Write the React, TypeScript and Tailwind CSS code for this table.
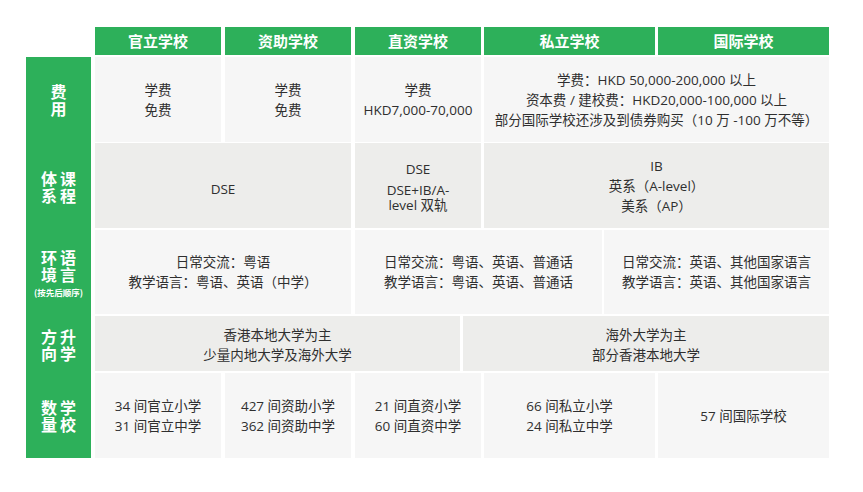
import React from 'react';

// cell backgrounds alternate by row
const LIGHT = 'bg-[#f6f6f6]';
const GREY = 'bg-[#ededeb]';

type CellProps = { w: string; bg: string; children: React.ReactNode };

const Cell = ({ w, bg, children }: CellProps) => (
  <div className={`${w} ${bg} h-full flex flex-col items-center justify-center text-center text-[13.5px] leading-[20px] text-[#2f2f2f] font-['Open_Sans','Noto_Sans_CJK_SC',sans-serif]`}>
    {children}
  </div>
);

const headers = [
  { name: '官立学校', w: 'w-[126px]' },
  { name: '资助学校', w: 'w-[126px]' },
  { name: '直资学校', w: 'w-[126px]' },
  { name: '私立学校', w: 'w-[171px]' },
  { name: '国际学校', w: 'w-[171px]' },
];

const Label = ({ h, lines, note }: { h: string; lines: string[]; note?: string }) => (
  <div className={`${h} flex flex-col items-center justify-center text-white font-bold`}>
    {lines.map((l) => (
      <div key={l} className="text-[16px] leading-[17px] tracking-[3px] pl-[3px]">{l}</div>
    ))}
    {note && <div className="text-[8.5px] leading-[12px] mt-[3px]">{note}</div>}
  </div>
);

export default function App() {
  return (
    <div className="w-[863px] h-[492px] bg-white pt-[27px] pl-[26px] font-['Noto_Sans_CJK_SC','Noto_Sans',sans-serif]">
      {/* header row */}
      <div className="flex h-[28px]">
        <div className="w-[69px]" />
        <div className="flex gap-[4px]">
          {headers.slice(0, 3).map((h) => (
            <div key={h.name} className={`${h.w} bg-[#2db05a] flex items-center justify-center text-white font-bold text-[15px]`}>
              {h.name}
            </div>
          ))}
        </div>
        <div className="flex gap-[3px] ml-[3px]">
          {headers.slice(3).map((h) => (
            <div key={h.name} className={`${h.w} bg-[#2db05a] flex items-center justify-center text-white font-bold text-[15px]`}>
              {h.name}
            </div>
          ))}
        </div>
      </div>

      <div className="flex mt-[2px]">
        {/* left label column */}
        <div className="w-[65px] bg-[#2db05a] flex flex-col">
          <Label h="h-[86px]" lines={['费', '用']} />
          <Label h="h-[87px]" lines={['体课', '系程']} />
          <Label h="h-[86px]" lines={['环语', '境言']} note="(按先后顺序)" />
          <Label h="h-[57px]" lines={['方升', '向学']} />
          <Label h="h-[85px]" lines={['数学', '量校']} />
        </div>

        <div className="ml-[4px] w-[734px] flex flex-col">
          {/* fees */}
          <div className="flex h-[85px]">
            <Cell w="w-[126px]" bg={LIGHT}><div>学费</div><div>免费</div></Cell>
            <div className="w-[4px]" />
            <Cell w="w-[126px]" bg={LIGHT}><div>学费</div><div>免费</div></Cell>
            <div className="w-[4px]" />
            <Cell w="w-[126px]" bg={LIGHT}><div>学费</div><div>HKD7,000-70,000</div></Cell>
            <div className="w-[3px]" />
            <Cell w="w-[345px]" bg={LIGHT}>
              <div>学费：HKD 50,000-200,000 以上</div>
              <div>资本费 / 建校费：HKD20,000-100,000 以上</div>
              <div>部分国际学校还涉及到债券购买（10 万 -100 万不等）</div>
            </Cell>
          </div>

          {/* curriculum */}
          <div className="flex h-[85px] mt-[1px]">
            <Cell w="w-[256px]" bg={GREY}><div className="pt-[7px]">DSE</div></Cell>
            <div className="w-[4px]" />
            <Cell w="w-[126px]" bg={GREY}>
              <div>DSE</div>
              <div className="leading-[15px] mt-[4px]">DSE+IB/A-<br />level 双轨</div>
            </Cell>
            <div className="w-[3px]" />
            <Cell w="w-[345px]" bg={GREY}>
              <div>IB</div>
              <div>英系（A-level）</div>
              <div>美系（AP）</div>
            </Cell>
          </div>

          {/* language */}
          <div className="flex h-[84px] mt-[2px]">
            <Cell w="w-[256px]" bg={LIGHT}>
              <div>日常交流：粤语</div>
              <div>教学语言：粤语、英语（中学）</div>
            </Cell>
            <div className="w-[4px]" />
            <Cell w="w-[247px]" bg={LIGHT}>
              <div>日常交流：粤语、英语、普通话</div>
              <div>教学语言：粤语、英语、普通话</div>
            </Cell>
            <div className="w-[2px]" />
            <Cell w="w-[225px]" bg={LIGHT}>
              <div>日常交流：英语、其他国家语言</div>
              <div>教学语言：英语、其他国家语言</div>
            </Cell>
          </div>

          {/* university */}
          <div className="flex h-[55px] mt-[2px]">
            <Cell w="w-[365px]" bg={GREY}>
              <div className="pt-[3px]">香港本地大学为主</div>
              <div>少量内地大学及海外大学</div>
            </Cell>
            <div className="w-[3px]" />
            <Cell w="w-[366px]" bg={GREY}>
              <div className="pt-[3px]">海外大学为主</div>
              <div>部分香港本地大学</div>
            </Cell>
          </div>

          {/* counts */}
          <div className="flex h-[85px] mt-[2px]">
            <Cell w="w-[126px]" bg={LIGHT}><div>34 间官立小学</div><div>31 间官立中学</div></Cell>
            <div className="w-[4px]" />
            <Cell w="w-[126px]" bg={LIGHT}><div>427 间资助小学</div><div>362 间资助中学</div></Cell>
            <div className="w-[4px]" />
            <Cell w="w-[126px]" bg={LIGHT}><div>21 间直资小学</div><div>60 间直资中学</div></Cell>
            <div className="w-[3px]" />
            <Cell w="w-[171px]" bg={LIGHT}><div>66 间私立小学</div><div>24 间私立中学</div></Cell>
            <div className="w-[3px]" />
            <Cell w="w-[171px]" bg={LIGHT}><div>57 间国际学校</div></Cell>
          </div>
        </div>
      </div>
    </div>
  );
}
